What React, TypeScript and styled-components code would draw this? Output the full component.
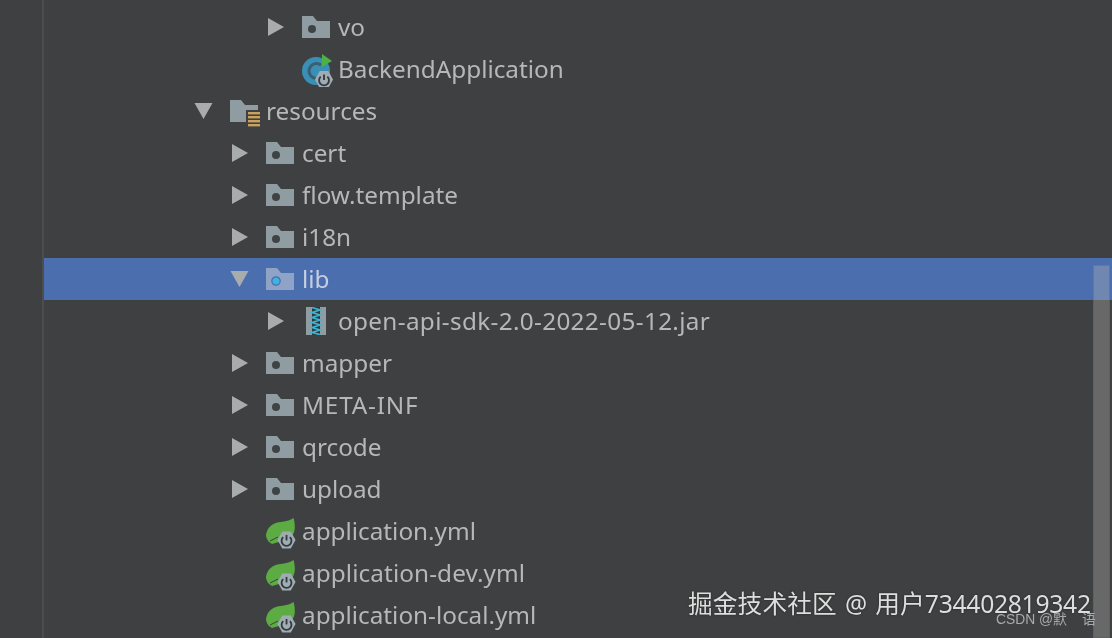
import React from "react";
import styled, { createGlobalStyle } from "styled-components";

const Global = createGlobalStyle`
  html, body { margin: 0; padding: 0; height: 100%; background: #3e4041; overflow: hidden; }
  #root { height: 100%; }
`;

const Frame = styled.div`
  position: relative;
  display: flex;
  width: 1112px;
  height: 638px;
  overflow: hidden;
  background: #3e4041;
  font-family: "Noto Sans", "Open Sans", "Liberation Sans", sans-serif;
  filter: blur(0.35px);
`;

const Gutter = styled.div`
  flex: 0 0 42px;
  border-right: 2px solid #4b4d4e;
`;

const Tree = styled.div`
  flex: 1;
  padding-top: 6px;
`;

const Row = styled.div<{ $depth: number; $selected?: boolean }>`
  display: flex;
  align-items: center;
  box-sizing: border-box;
  height: 42px;
  padding-left: ${(p) => 150 + p.$depth * 36}px;
  background: ${(p) => (p.$selected ? "#4b6eaf" : "transparent")};
`;

const ArrowSlot = styled.span`
  flex: 0 0 36px;
  height: 42px;
  display: flex;
  align-items: center;
`;

const IconSlot = styled.span`
  flex: 0 0 36px;
  height: 42px;
  display: flex;
  align-items: center;
`;

const Label = styled.span<{ $selected?: boolean; $tracking?: number }>`
  font-size: 24.3px;
  line-height: 42px;
  white-space: nowrap;
  letter-spacing: ${(p) => p.$tracking ?? 0}px;
  color: ${(p) => (p.$selected ? "#c6cfdf" : "#b6b8b8")};
`;

const Scrollbar = styled.div`
  position: absolute;
  left: 1093px;
  top: 265px;
  width: 17px;
  height: 373px;
  background: rgba(190, 190, 184, 0.32);
  box-shadow: inset 0 0 0 1px rgba(70, 72, 74, 0.25);
`;

const Watermark = styled.div`
  position: absolute;
  left: 688px;
  top: 586px;
  font-family: "Noto Sans", "Noto Sans CJK SC", sans-serif;
  font-size: 24.7px;
  letter-spacing: 0.12px;
  word-spacing: 1.5px;
  line-height: 36px;
  white-space: nowrap;
  color: #dedede;
  text-shadow: 0 0 2px #222;
`;

const WatermarkDigits = styled.span`
  letter-spacing: -0.3px;
`;

const Credit = styled.div`
  position: absolute;
  left: 996px;
  top: 610px;
  font-family: "Liberation Sans", "Noto Sans CJK SC", sans-serif;
  font-size: 13.8px;
  line-height: 20px;
  white-space: pre;
  color: #a8aaab;
`;

const Arrow = ({ open }: { open: boolean }) => (
  <svg width="20" height="20" viewBox="0 0 20 20">
    {open ? (
      <polygon points="0.5,2 18.5,2 9.5,18" fill="#a9acad" />
    ) : (
      <polygon points="2,1 18,10 2,19" fill="#a9acad" />
    )}
  </svg>
);

const FolderShape = ({ fill }: { fill: string }) => (
  <path d="M0 0H11L15 5H28V22H0Z" fill={fill} />
);

const FolderIcon = ({ selected }: { selected?: boolean }) => (
  <svg width="28" height="22" viewBox="0 0 28 22">
    <FolderShape fill={selected ? "#8ea3c6" : "#8f9da2"} />
    {selected ? (
      <circle cx="10" cy="13" r="4.2" fill="#3fb3e0" stroke="#4b6eaf" strokeWidth="1.2" />
    ) : (
      <circle cx="10" cy="13" r="4" fill="#3f4345" />
    )}
  </svg>
);

const ResourcesIcon = () => (
  <svg width="30" height="28" viewBox="0 0 30 28" style={{ marginTop: 6 }}>
    <FolderShape fill="#8f9da2" />
    <rect x="16" y="10" width="14" height="17" fill="#3e4041" />
    <g fill="#c9a25f">
      <rect x="18" y="12" width="12" height="2.4" />
      <rect x="18" y="16" width="12" height="2.4" />
      <rect x="18" y="20" width="12" height="2.4" />
      <rect x="18" y="24" width="12" height="2.4" />
    </g>
  </svg>
);

const JarIcon = () => (
  <svg width="28" height="28" viewBox="0 0 28 28">
    <rect x="4" y="0" width="20" height="28" fill="#8f9da2" />
    <rect x="10" y="0" width="8" height="28" fill="#2f3a3e" />
    <path
      d="M10 0.5l8 2.5-8 2.5 8 2.5-8 2.5 8 2.5-8 2.5 8 2.5-8 2.5 8 2.5-8 2.5 8 2"
      fill="none"
      stroke="#3fb3d2"
      strokeWidth="1.7"
    />
  </svg>
);

const Hex = ({ x, y }: { x: number; y: number }) => (
  <g transform={`translate(${x} ${y}) scale(0.95)`}>
    <polygon points="5,0 14,0 19,9 14,18 5,18 0,9" fill="#a0acb4" />
    <path d="M6 6a5.2 5.2 0 1 0 7 0" fill="none" stroke="#33383a" strokeWidth="1.9" />
    <path d="M9.5 3.6v5.8" stroke="#33383a" strokeWidth="1.9" />
  </g>
);

const SpringIcon = () => (
  <svg width="32" height="36" viewBox="0 0 32 36">
    <path
      d="M0 22C1 14 8 9 15 9C21 8 25 7 27.5 5C29.5 12 29.5 19 26 23L13 29L6 31L3 29C1 27 0 24 0 22Z"
      fill="#5cac43"
    />
    <path d="M4 28L12 24" stroke="#3e4041" strokeWidth="1" />
    <Hex x={11.5} y={18.5} />
  </svg>
);

const AppIcon = () => (
  <svg width="32" height="36" viewBox="0 0 32 36">
    <circle cx="14" cy="20" r="14" fill="#3a8fb6" />
    <path d="M19 14a7.5 7.5 0 1 0 0 12" fill="none" stroke="#3a5f72" strokeWidth="3" />
    <polygon points="20,3 30,10 20,16" fill="#4fb044" />
    <Hex x={13} y={20} />
  </svg>
);

type Kind = "folder" | "resources" | "jar" | "spring" | "app";
type Item = {
  name: string;
  depth: number;
  kind: Kind;
  arrow?: "open" | "closed";
  selected?: boolean;
  tracking?: number;
};

const items: Item[] = [
  { name: "vo", depth: 2, kind: "folder", arrow: "closed" },
  { name: "BackendApplication", depth: 2, kind: "app" },
  { name: "resources", depth: 0, kind: "resources", arrow: "open" },
  { name: "cert", depth: 1, kind: "folder", arrow: "closed" },
  { name: "flow.template", depth: 1, kind: "folder", arrow: "closed" },
  { name: "i18n", depth: 1, kind: "folder", arrow: "closed" },
  { name: "lib", depth: 1, kind: "folder", arrow: "open", selected: true },
  { name: "open-api-sdk-2.0-2022-05-12.jar", depth: 2, kind: "jar", arrow: "closed", tracking: 0.34 },
  { name: "mapper", depth: 1, kind: "folder", arrow: "closed" },
  { name: "META-INF", depth: 1, kind: "folder", arrow: "closed", tracking: 0.8 },
  { name: "qrcode", depth: 1, kind: "folder", arrow: "closed" },
  { name: "upload", depth: 1, kind: "folder", arrow: "closed" },
  { name: "application.yml", depth: 1, kind: "spring" },
  { name: "application-dev.yml", depth: 1, kind: "spring", tracking: 0.1 },
  { name: "application-local.yml", depth: 1, kind: "spring" },
];

const renderIcon = (item: Item) => {
  switch (item.kind) {
    case "folder":
      return <FolderIcon selected={item.selected} />;
    case "resources":
      return <ResourcesIcon />;
    case "jar":
      return <JarIcon />;
    case "spring":
      return <SpringIcon />;
    case "app":
      return <AppIcon />;
  }
};

export default function App() {
  return (
    <Frame>
      <Global />
      <Gutter />
      <Tree>
        {items.map((item) => (
          <Row key={item.name} $depth={item.depth} $selected={item.selected}>
            <ArrowSlot>{item.arrow && <Arrow open={item.arrow === "open"} />}</ArrowSlot>
            <IconSlot>{renderIcon(item)}</IconSlot>
            <Label $selected={item.selected} $tracking={item.tracking}>
              {item.name}
            </Label>
          </Row>
        ))}
      </Tree>
      <Scrollbar />
      <Watermark>
        掘金技术社区 @ 用户<WatermarkDigits>734402819342</WatermarkDigits>
      </Watermark>
      <Credit>{"CSDN @默    语"}</Credit>
    </Frame>
  );
}
